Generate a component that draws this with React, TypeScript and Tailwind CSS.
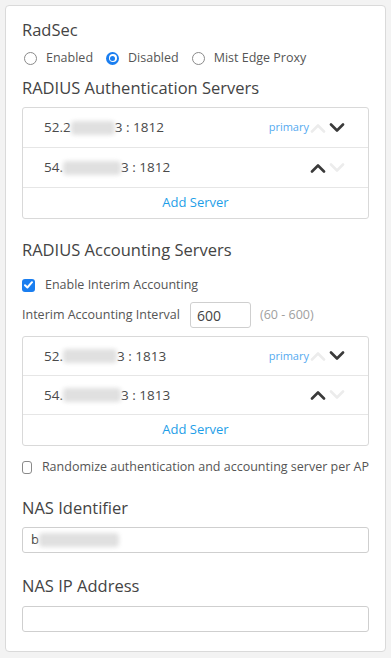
import React from 'react'

const font = { fontFamily: '"Open Sans", "Noto Sans", Arial, sans-serif' }

function Radio({ checked, label }: { checked?: boolean; label: string }) {
  return (
    <label className="flex items-center">
      {checked ? (
        <span className="w-[13px] h-[13px] rounded-full bg-[#1a7ef0] flex items-center justify-center">
          <span className="w-[8px] h-[8px] rounded-full bg-white flex items-center justify-center">
            <span className="w-[5px] h-[5px] rounded-full bg-[#1a7ef0]" />
          </span>
        </span>
      ) : (
        <span className="w-[13px] h-[13px] rounded-full border border-[#8a8a8a] bg-white" />
      )}
      <span className="ml-[9px] text-[12.5px] text-[#555]">{label}</span>
    </label>
  )
}

function Checkbox({ checked, label }: { checked?: boolean; label: string }) {
  return (
    <label className="flex items-center h-[20px]">
      {checked ? (
        <span className="w-[13px] h-[13px] rounded-[3px] bg-[#1a7ef0] flex items-center justify-center">
          <svg width="9" height="8" viewBox="0 0 9 8">
            <polyline points="1,4.2 3.4,6.5 8,1.2" fill="none" stroke="white" strokeWidth="2" strokeLinecap="round" strokeLinejoin="round" />
          </svg>
        </span>
      ) : (
        <span className="w-[13px] h-[13px] rounded-[3px] border border-[#8a8a8a] bg-white" />
      )}
      <span className="ml-[10px] text-[12.5px] text-[#555] whitespace-nowrap">{label}</span>
    </label>
  )
}

function Chevron({ up, active }: { up?: boolean; active?: boolean }) {
  return (
    <svg width="16" height="10" viewBox="0 0 16 10">
      <polyline
        points={up ? '2,8.5 8,2.5 14,8.5' : '2,1.5 8,7.5 14,1.5'}
        fill="none"
        stroke={active ? '#3a3a3a' : '#ececec'}
        strokeWidth="2.6"
        strokeLinecap="round"
        strokeLinejoin="round"
      />
    </svg>
  )
}

interface Server {
  head: string
  blur: number
  tail: string
  primary?: boolean
}

function Masked({ w }: { w: number }) {
  return (
    <span className="inline-block h-[14px] bg-[#e0e0e0] blur-[2px] rounded-sm" style={{ width: w }} />
  )
}

function ServerBox({ servers, rowH }: { servers: Server[]; rowH: string }) {
  return (
    <div className="border border-[#d9d9d9] rounded-[3px] bg-white">
      {servers.map((s, i) => (
        <div key={i} className={`flex items-center ${rowH} pl-[21px] pr-[23px] border-b border-[#e6e6e6]`}>
          <span className="flex items-center text-[13.5px] font-medium text-[#4a4a4a]">
            {s.head}
            <Masked w={s.blur} />
            {s.tail}
          </span>
          <span className="ml-auto flex items-center">
            {s.primary && <span className="text-[11px] text-[#55aaf0] mr-[1px]">primary</span>}
            <span className="flex items-center gap-[3px]">
              <Chevron up active={!s.primary} />
              <Chevron active={s.primary} />
            </span>
          </span>
        </div>
      ))}
      <div className="h-[30px] flex items-center justify-center text-[13px] font-medium text-[#1e9ee8]">
        Add Server
      </div>
    </div>
  )
}

export default function App() {
  return (
    <div className="min-h-[658px] bg-[#f3f3f3] pt-[5px] px-[5px] pb-[6px]" style={font}>
      <div className="w-[381px] bg-white border border-[#dadada] rounded-[4px] px-[16px] pt-[12px] pb-[19px]">
        <h2 className="text-[16.5px] leading-[24px] text-[#444]">RadSec</h2>
        <div className="mt-[6px] h-[20px] flex items-center gap-[13px] pl-[2px]">
          <Radio label="Enabled" />
          <Radio checked label="Disabled" />
          <Radio label="Mist Edge Proxy" />
        </div>

        <h2 className="mt-[8px] text-[16.5px] leading-[24px] text-[#444]">RADIUS Authentication Servers</h2>
        <div className="mt-[7px]">
          <ServerBox
            rowH="h-[40px]"
            servers={[
              { head: '52.2', blur: 44, tail: '3 : 1812', primary: true },
              { head: '54.', blur: 58, tail: '3 : 1812' },
            ]}
          />
        </div>

        <h2 className="mt-[19px] text-[16.5px] leading-[24px] text-[#444]">RADIUS Accounting Servers</h2>
        <div className="mt-[13px]">
          <Checkbox checked label="Enable Interim Accounting" />
        </div>
        <div className="mt-[7px] flex items-center">
          <span className="text-[12.5px] text-[#555] w-[168px]">Interim Accounting Interval</span>
          <div className="w-[61px] h-[26px] border border-[#cfcfcf] rounded-[3px] flex items-center px-[6px] text-[14px] text-[#444]">
            600
          </div>
          <span className="ml-[9px] text-[12.5px] text-[#a0a0a0]">(60 - 600)</span>
        </div>
        <div className="mt-[8px]">
          <ServerBox
            rowH="h-[39px]"
            servers={[
              { head: '52.', blur: 54, tail: '3 : 1813', primary: true },
              { head: '54.', blur: 58, tail: '3 : 1813' },
            ]}
          />
        </div>
        <div className="mt-[11px]">
          <Checkbox label="Randomize authentication and accounting server per AP" />
        </div>

        <h2 className="mt-[19px] text-[16.5px] leading-[24px] text-[#444]">NAS Identifier</h2>
        <div className="mt-[7px] h-[26px] border border-[#cfcfcf] rounded-[3px] flex items-center px-[8px] text-[13px] text-[#444]">
          b
          <Masked w={80} />
        </div>

        <h2 className="mt-[21px] text-[16.5px] leading-[24px] text-[#444]">NAS IP Address</h2>
        <div className="mt-[8px] h-[26px] border border-[#cfcfcf] rounded-[3px]" />
      </div>
    </div>
  )
}
